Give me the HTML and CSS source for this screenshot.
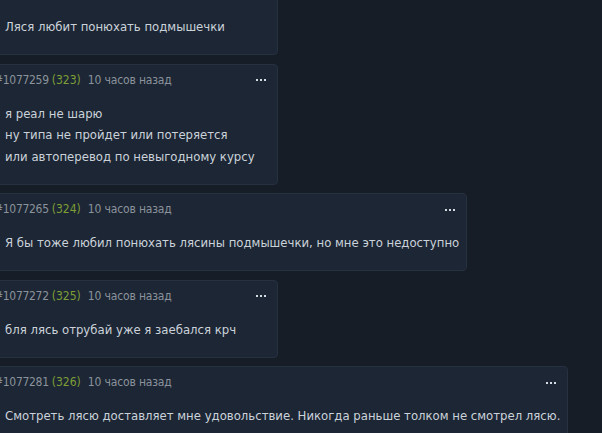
FILE: index.html
```html
<!DOCTYPE html>
<html>
<head>
    <title>Комментарии</title>
    <link rel="stylesheet" href="styles.css">
</head>
<body>
    <div class="thread">
        <div class="post first">
            <div class="post-head">
                <span class="num">#1077252</span> <span class="replies">(322)</span>
                <span class="time">10 часов назад</span>
                <span class="more"><svg width="10" height="4" viewBox="0 0 10 4"><rect x="0" y="1" width="2" height="2"/><rect x="4" y="1" width="2" height="2"/><rect x="8" y="1" width="2" height="2"/></svg></span>
            </div>
            <div class="post-body">Ляся любит понюхать подмышечки</div>
        </div>

        <div class="post">
            <div class="post-head">
                <span class="num">#1077259</span> <span class="replies">(323)</span>
                <span class="time">10 часов назад</span>
                <span class="more"><svg width="10" height="4" viewBox="0 0 10 4"><rect x="0" y="1" width="2" height="2"/><rect x="4" y="1" width="2" height="2"/><rect x="8" y="1" width="2" height="2"/></svg></span>
            </div>
            <div class="post-body">я реал не шарю<br>ну типа не пройдет или потеряется<br>или автоперевод по невыгодному курсу</div>
        </div>

        <div class="post">
            <div class="post-head">
                <span class="num">#1077265</span> <span class="replies">(324)</span>
                <span class="time">10 часов назад</span>
                <span class="more"><svg width="10" height="4" viewBox="0 0 10 4"><rect x="0" y="1" width="2" height="2"/><rect x="4" y="1" width="2" height="2"/><rect x="8" y="1" width="2" height="2"/></svg></span>
            </div>
            <div class="post-body">Я бы тоже любил понюхать лясины подмышечки, но мне это недоступно</div>
        </div>

        <div class="post">
            <div class="post-head">
                <span class="num">#1077272</span> <span class="replies">(325)</span>
                <span class="time">10 часов назад</span>
                <span class="more"><svg width="10" height="4" viewBox="0 0 10 4"><rect x="0" y="1" width="2" height="2"/><rect x="4" y="1" width="2" height="2"/><rect x="8" y="1" width="2" height="2"/></svg></span>
            </div>
            <div class="post-body">бля лясь отрубай уже я заебался крч</div>
        </div>

        <div class="post">
            <div class="post-head">
                <span class="num">#1077281</span> <span class="replies">(326)</span>
                <span class="time">10 часов назад</span>
                <span class="more"><svg width="10" height="4" viewBox="0 0 10 4"><rect x="0" y="1" width="2" height="2"/><rect x="4" y="1" width="2" height="2"/><rect x="8" y="1" width="2" height="2"/></svg></span>
            </div>
            <div class="post-body">Смотреть лясю доставляет мне удовольствие. Никогда раньше толком не смотрел лясю.</div>
        </div>
    </div>
</body>
</html>
```

FILE: styles.css
```css
body {
    margin: 0;
    background: #171d26;
    font-family: "DejaVu Sans Condensed", "DejaVu Sans", sans-serif;
    overflow: hidden;
}
.thread {
    display: flex;
    flex-direction: column;
    align-items: flex-start;
    gap: 8.5px;
    margin-left: -4px;
}
.post {
    min-width: 282px;
    box-sizing: border-box;
    background: #1c2634;
    border: 1px solid #253040;
    border-radius: 4px;
    padding: 8px 7px 16.5px 0;
}
.first {
    margin-top: -23px;
}
.post-head {
    display: flex;
    align-items: center;
    margin-left: -3px;
    font-size: 12px;
    line-height: 15px;
    color: #8b929b;
}
.num {
    letter-spacing: -0.3px;
}
.replies {
    color: #7e9f35;
    margin-left: 3px;
}
.time {
    margin-left: 7px;
    letter-spacing: -0.15px;
}
.more {
    margin-left: auto;
    padding-right: 4px;
    display: flex;
    fill: #d5dbe2;
}
.post-body {
    margin-top: 15px;
    padding-left: 8px;
    font-size: 13px;
    line-height: 21.5px;
    color: #cbd2da;
}
```
